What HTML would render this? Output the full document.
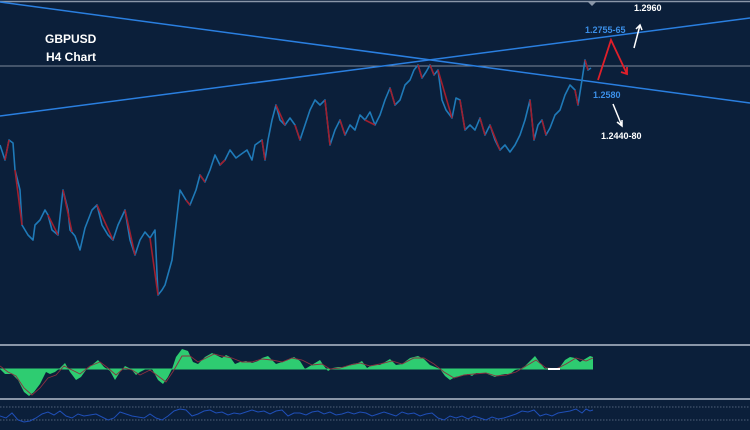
<!DOCTYPE html>
<html><head><meta charset="utf-8"><style>
html,body{margin:0;padding:0;background:#0b1f3a;}
svg{display:block}
text{font-family:"Liberation Sans",sans-serif;font-weight:bold}
</style></head><body>
<svg width="750" height="430" viewBox="0 0 750 430" xmlns="http://www.w3.org/2000/svg">
<rect width="750" height="430" fill="#0b1f3a"/>
<line x1="0" y1="1.5" x2="750" y2="1.5" stroke="#8a96a8" stroke-width="1.5"/>
<path d="M588 2 l4 4 l4 -4z" fill="#8a96a8"/>
<line x1="0" y1="66" x2="750" y2="66" stroke="#7d889a" stroke-width="1"/>
<!-- trend lines -->
<line x1="0" y1="2" x2="750" y2="103" stroke="#2a7fe0" stroke-width="1.5"/>
<line x1="0" y1="116" x2="750" y2="18" stroke="#2a7fe0" stroke-width="1.5"/>
<!-- price -->
<g fill="none" stroke-width="1.6" stroke-linejoin="round">
<path stroke="#1f7ab8" d="M0 145 L5 160 L9 140 L13 143 L15 170 L20 190 L22 225 L28 235 L33 240 L35 225 L40 220 L45 210 L48 215 L52 230 L58 235 L63 190 L68 210 L70 230 L75 236 L80 250 L85 228 L92 210 L97 205 L102 225 L108 235 L113 240 L118 225 L125 210 L130 240 L135 255 L140 240 L145 232 L150 238 L155 230 L158 295 L162 290 L165 285 L172 260 L176 225 L180 190 L186 200 L190 205 L196 190 L200 175 L205 182 L210 170 L215 155 L220 165 L225 160 L230 150 L236 158 L240 155 L247 150 L252 160 L255 145 L262 140 L265 160 L268 140 L272 120 L276 105 L280 120 L285 125 L290 118 L295 125 L300 140 L305 125 L310 110 L315 100 L320 105 L325 100 L330 145 L335 130 L340 120 L345 135 L350 125 L355 130 L360 115 L365 120 L370 112 L375 125 L380 115 L385 100 L390 88 L395 105 L400 100 L405 85 L410 80 L414 70 L418 65 L422 78 L426 72 L430 65 L434 75 L438 70 L442 100 L446 110 L452 118 L456 98 L460 100 L465 130 L470 125 L475 130 L480 118 L485 135 L490 125 L495 140 L500 150 L505 145 L510 152 L515 145 L520 135 L525 120 L530 100 L534 140 L538 125 L542 120 L546 135 L550 128 L555 115 L560 110 L565 95 L570 85 L575 90 L578 105 L582 80 L585 60 L588 70 L591 68"/>
<path stroke="#a01f2e" d="M5 160 L9 140 M15 170 L22 225 M48 215 L58 235 M63 190 L72 232 M97 205 L113 240 M125 210 L135 255 M150 238 L158 295 M186 200 L190 205 M205 182 L200 175 M225 160 L220 165 M262 140 L265 160 M276 105 L285 125 M295 125 L300 140 M325 100 L330 145 M340 120 L345 135 M365 120 L375 125 M390 88 L395 105 M418 65 L422 78 M430 65 L434 75 M438 70 L452 118 M460 100 L465 130 M480 118 L485 135 M490 125 L500 150 M530 100 L534 140 M542 120 L546 135 M575 90 L578 105 M585 60 L588 70"/>
</g>
<!-- labels -->
<text x="45" y="43" fill="#fff" font-size="12">GBPUSD</text>
<text x="46" y="61" fill="#fff" font-size="12">H4 Chart</text>
<text x="634" y="11" fill="#fff" font-size="9">1.2960</text>
<text x="585" y="33" fill="#3b8fe8" font-size="9">1.2755-65</text>
<text x="593" y="98" fill="#3b8fe8" font-size="9">1.2580</text>
<text x="601" y="139" fill="#fff" font-size="9">1.2440-80</text>
<path d="M634 48 L640 25 M636 29 L640 25 L642 30" stroke="#fff" stroke-width="1.5" fill="none"/>
<path d="M613 104 L622 126 M617 122 L622 126 L622 120" stroke="#fff" stroke-width="1.5" fill="none"/>
<path d="M598 80 L611 40 L627 74 M621 72 L627 74 L627 67" stroke="#e01f2a" stroke-width="1.8" fill="none"/>
<!-- indicator panel -->
<line x1="0" y1="345" x2="750" y2="345" stroke="#8a96a8" stroke-width="2"/>
<line x1="0" y1="399" x2="750" y2="399" stroke="#8a96a8" stroke-width="2"/>
<path fill="#2ecc71" d="M0 369 L5 374 L12 374 L18 380 L24 392 L29 396 L34 392 L40 384 L46 372 L50 374 L55 372 L60 368 L65 363 L70 372 L76 380 L81 377 L86 370 L92 365 L98 360 L104 367 L110 371 L115 380 L120 372 L125 366 L131 369 L136 375 L140 372 L146 369 L152 369 L158 380 L163 384 L168 377 L172 369 L176 357 L182 349 L188 351 L193 362 L198 364 L205 357 L212 353 L218 356 L222 358 L226 355 L230 357 L235 364 L240 362 L246 361 L252 363 L258 361 L262 358 L268 356 L272 360 L276 364 L282 362 L288 360 L294 357 L300 361 L305 369 L310 366 L315 363 L320 360 L324 366 L328 371 L333 368 L338 367 L345 367 L352 364 L358 363 L362 361 L367 368 L372 365 L380 365 L385 362 L390 359 L396 365 L402 364 L410 358 L418 356 L424 359 L430 365 L440 369 L445 376 L450 380 L455 377 L462 376 L468 374 L472 376 L476 373 L485 373 L490 375 L495 377 L500 375 L505 374 L510 374 L515 370 L520 369 L525 366 L530 361 L535 356 L540 363 L545 369 L550 369 L555 370 L560 367 L565 360 L570 357 L575 358 L580 362 L585 359 L590 356 L593 357 L593 369 Z M0 369 L593 369 L593 369"/>
<rect x="0" y="368.5" width="593" height="1" fill="#2ecc71"/>
<path fill="none" stroke="#8a3040" stroke-width="0.9" d="M0 366 L8 372 L16 376 L24 388 L32 395 L40 388 L48 378 L56 375 L64 366 L72 370 L80 374 L90 366 L100 362 L108 368 L116 375 L124 368 L132 370 L140 375 L150 370 L158 376 L166 382 L174 370 L182 356 L190 356 L198 362 L206 358 L214 354 L222 356 L232 358 L242 362 L252 362 L262 359 L272 360 L282 362 L292 358 L302 360 L312 365 L322 364 L330 369 L340 368 L350 365 L360 363 L370 366 L380 364 L392 361 L402 364 L414 358 L424 358 L434 364 L444 372 L454 378 L464 375 L474 374 L486 373 L496 376 L506 375 L516 372 L526 366 L536 360 L546 368 L556 369 L566 364 L576 358 L586 361 L593 358"/>
<rect x="548" y="368" width="12" height="2" fill="#fff"/>
<!-- RSI panel -->
<line x1="0" y1="407" x2="750" y2="407" stroke="#6a7890" stroke-width="0.8" stroke-dasharray="1.5 1.5"/>
<line x1="0" y1="420" x2="750" y2="420" stroke="#6a7890" stroke-width="0.8" stroke-dasharray="1.5 1.5"/>
<path fill="none" stroke="#1f4fb8" stroke-width="1" d="M0 416 L6 418 L12 413 L18 420 L24 422 L30 421 L36 418 L42 414 L48 412 L54 415 L60 411 L66 416 L72 418 L78 414 L84 416 L90 415 L96 414 L102 417 L108 420 L114 418 L120 412 L126 414 L132 416 L138 417 L144 418 L150 414 L156 418 L162 420 L168 416 L174 411 L180 409 L186 410 L192 416 L198 414 L204 411 L210 410 L216 413 L222 412 L228 415 L234 413 L240 414 L246 412 L252 410 L258 412 L264 411 L270 414 L276 411 L282 410 L288 416 L294 413 L300 413 L306 415 L312 412 L318 411 L324 414 L330 412 L336 415 L342 414 L348 412 L354 414 L360 412 L366 413 L372 416 L378 414 L384 412 L390 414 L396 416 L402 412 L408 414 L414 413 L420 416 L426 414 L432 413 L438 418 L444 420 L450 416 L456 418 L462 416 L468 419 L474 416 L480 418 L486 420 L492 417 L498 419 L504 418 L510 416 L516 414 L522 411 L528 412 L534 410 L540 416 L546 414 L552 416 L558 413 L564 412 L570 411 L576 409 L582 413 L586 409 L590 411 L593 410"/>
</svg>
</body></html>
